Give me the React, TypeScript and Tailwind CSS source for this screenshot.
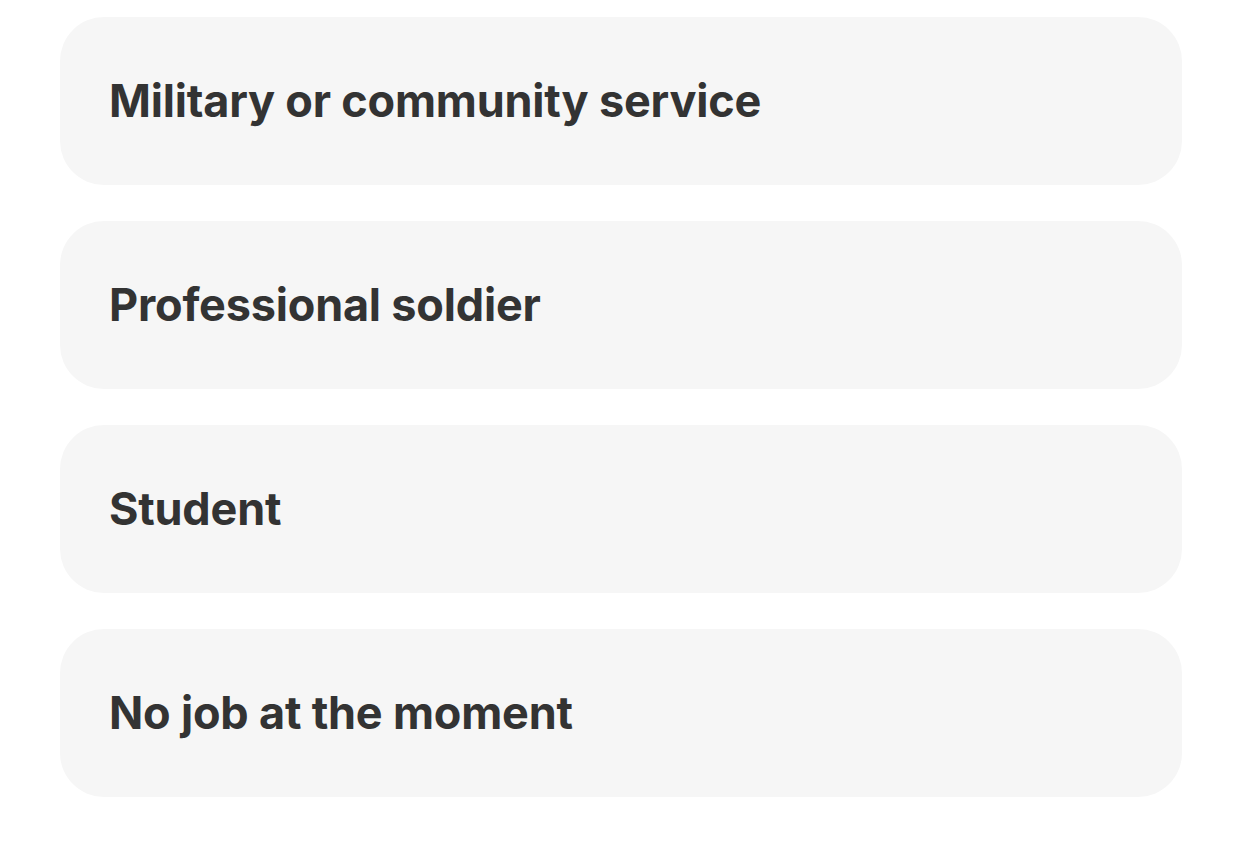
const options = [
  'Military or community service',
  'Professional soldier',
  'Student',
  'No job at the moment',
];

export default function App() {
  return (
    <div className="min-h-screen bg-white pt-[17px] px-[60px]" style={{ fontFamily: 'Inter, "Noto Sans", sans-serif' }}>
      <div className="flex flex-col gap-[36px]">
        {options.map((label) => (
          <div
            key={label}
            className="h-[168px] rounded-[44px] bg-[#f6f6f6] flex items-center px-[49px]"
          >
            <span className="text-[45px] font-bold text-[#333333] tracking-[-0.2px]">{label}</span>
          </div>
        ))}
      </div>
    </div>
  );
}
